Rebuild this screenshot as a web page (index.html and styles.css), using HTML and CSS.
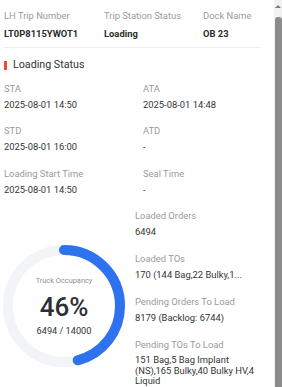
FILE: index.html
```html
<!DOCTYPE html>
<html>
<head>
<meta charset="utf-8">
<link rel="stylesheet" href="styles.css">
</head>
<body>
<div class="page">
  <main class="content">
    <section class="header-row">
      <div class="field">
        <div class="label">LH Trip Number</div>
        <div class="value strong">LT0P8115YWOT1</div>
      </div>
      <div class="field">
        <div class="label">Trip Station Status</div>
        <div class="value strong">Loading</div>
      </div>
      <div class="field">
        <div class="label">Dock Name</div>
        <div class="value strong">OB 23</div>
      </div>
    </section>
    <hr class="divider">
    <h2 class="section-title"><span class="marker"></span>Loading Status</h2>
    <section class="times">
      <div class="field">
        <div class="label">STA</div>
        <div class="value">2025-08-01 14:50</div>
      </div>
      <div class="field">
        <div class="label">ATA</div>
        <div class="value">2025-08-01 14:48</div>
      </div>
      <div class="field">
        <div class="label">STD</div>
        <div class="value">2025-08-01 16:00</div>
      </div>
      <div class="field">
        <div class="label">ATD</div>
        <div class="value">-</div>
      </div>
      <div class="field">
        <div class="label">Loading Start Time</div>
        <div class="value">2025-08-01 14:50</div>
      </div>
      <div class="field">
        <div class="label">Seal Time</div>
        <div class="value">-</div>
      </div>
    </section>
    <section class="occupancy">
      <div class="ring-wrap">
        <svg class="ring" width="122" height="122" viewBox="0 0 122 122">
          <circle cx="61" cy="61" r="56" fill="none" stroke="#f2f4f8" stroke-width="10"/>
          <circle cx="61" cy="61" r="56" fill="none" stroke="#2f72f0" stroke-width="10" stroke-linecap="round" stroke-dasharray="161.8 400" transform="rotate(-90 61 61)"/>
        </svg>
        <div class="ring-text">
          <div class="ring-label">Truck Occupancy</div>
          <div class="ring-pct">46%</div>
          <div class="ring-count">6494 / 14000</div>
        </div>
      </div>
      <div class="stats">
        <div class="field">
          <div class="label">Loaded Orders</div>
          <div class="value">6494</div>
        </div>
        <div class="field">
          <div class="label">Loaded TOs</div>
          <div class="value nowrap">170 (144 Bag,22 Bulky,1...</div>
        </div>
        <div class="field">
          <div class="label">Pending Orders To Load</div>
          <div class="value">8179 (Backlog: 6744)</div>
        </div>
        <div class="field">
          <div class="label">Pending TOs To Load</div>
          <div class="value multiline">151 Bag,5 Bag Implant (NS),165 Bulky,40 Bulky HV,4 Liquid</div>
        </div>
      </div>
    </section>
  </main>
  <div class="scrollbar">
    <div class="scroll-arrow"></div>
    <div class="scroll-thumb"></div>
  </div>
</div>
</body>
</html>
```

FILE: styles.css
```css
* { box-sizing: border-box; }
html, body {
  margin: 0;
  padding: 0;
  background: #ffffff;
}
body {
  font-family: Roboto, "Liberation Sans", sans-serif;
  color: #333333;
}
.page {
  display: flex;
  width: 282px;
  height: 387px;
  overflow: hidden;
}
.content {
  width: 274px;
  flex: 0 0 274px;
  padding: 9.5px 13px 0 4px;
  display: flex;
  flex-direction: column;
}
.field {
  display: flex;
  flex-direction: column;
  gap: 5px;
}
.label {
  font-size: 9.4px;
  line-height: 11px;
  color: #9a9a9a;
  white-space: nowrap;
}
.value {
  font-size: 9.4px;
  line-height: 11px;
  color: #333333;
}
.value.strong {
  font-weight: 700;
  color: #2b2b2b;
}
.value.multiline {
  line-height: 10.5px;
  margin-top: 0.25px;
}
.nowrap {
  white-space: nowrap;
}
.header-row {
  display: grid;
  grid-template-columns: 100px 99px 1fr;
}
.header-row .field { gap: 7px; }
.divider {
  border: 0;
  height: 1px;
  background: #ececf3;
  margin: 8.5px 0 0 0;
}
.section-title {
  display: flex;
  align-items: center;
  margin: 9.5px 0 0 0;
  font-size: 10.7px;
  line-height: 14px;
  font-weight: 400;
  color: #333333;
}
.marker {
  width: 3px;
  height: 9px;
  background: #ee4d2d;
  margin-right: 6px;
  margin-top: 1px;
}
.times {
  display: grid;
  grid-template-columns: 139px 1fr;
  row-gap: 15.5px;
  margin-top: 11.3px;
}
.occupancy {
  display: flex;
  align-items: flex-start;
  margin-top: 14.4px;
}
.ring-wrap {
  flex: 0 0 132px;
  display: grid;
  margin-top: 36px;
  margin-left: -1px;
}
.ring, .ring-text {
  grid-area: 1 / 1;
}
.ring-text {
  width: 122px;
  display: flex;
  flex-direction: column;
  align-items: center;
  padding-top: 30.8px;
}
.ring-label {
  font-size: 7.4px;
  line-height: 10px;
  color: #8a8f99;
}
.ring-pct {
  font-size: 26px;
  line-height: 30px;
  font-weight: 500;
  color: #2b2f36;
  margin-top: 6px;
}
.ring-count {
  font-size: 9.2px;
  line-height: 11px;
  color: #333333;
  margin-top: 3.5px;
}
.stats {
  flex: 1;
  min-width: 0;
  display: flex;
  flex-direction: column;
  gap: 16px;
  margin-top: 1px;
}
.scrollbar {
  flex: 0 0 8px;
  width: 8px;
  background: #f1f1f1;
  display: flex;
  flex-direction: column;
  align-items: flex-end;
}
.scroll-arrow {
  width: 0;
  height: 0;
  border-left: 3px solid transparent;
  border-right: 3px solid transparent;
  border-bottom: 3px solid #7a7a7a;
  margin: 5px 1px 0 0;
}
.scroll-thumb {
  flex: 1;
  width: 7px;
  margin-top: 9px;
  background: #8c8c8c;
  border-radius: 3px 3px 0 0;
}
```
